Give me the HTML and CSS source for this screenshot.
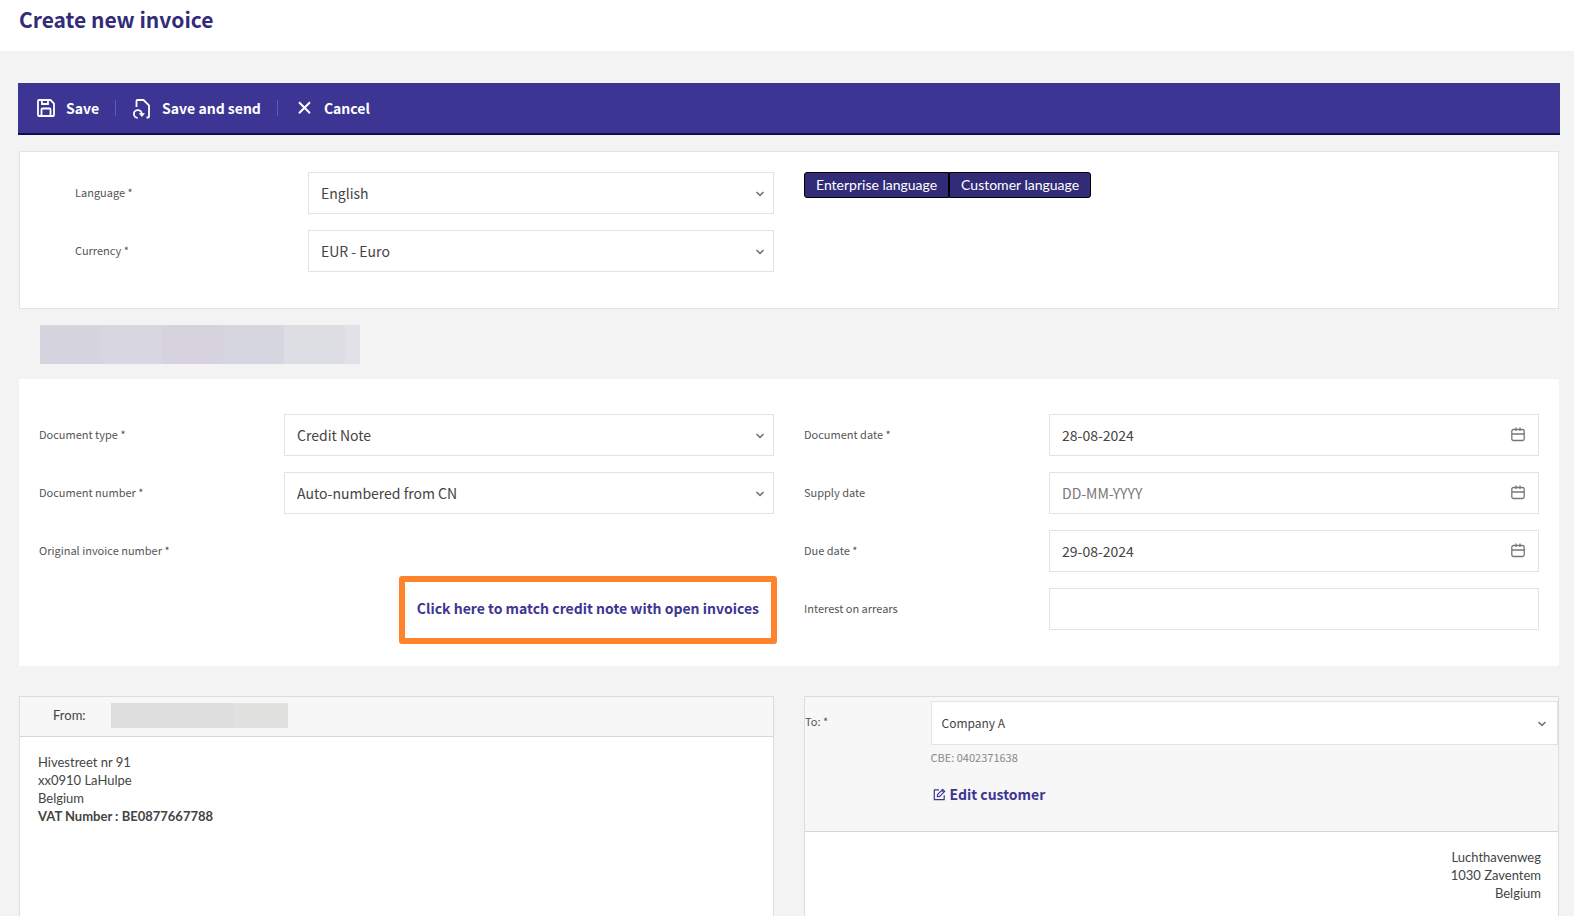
FILE: index.html
```html
<!DOCTYPE html>
<html lang="en">
<head>
<meta charset="utf-8">
<meta name="viewport" content="width=device-width, initial-scale=1">
<title>Create new invoice</title>
<link rel="stylesheet" href="styles.css">
</head>
<body>
<svg class="sprite" aria-hidden="true">
  <symbol id="chevron" viewBox="0 0 10 6"><path d="M1.5 1 5 4.3 8.500 1" fill="none" stroke="currentColor" stroke-width="1.700"/></symbol>
  <symbol id="calendar" viewBox="0 0 14 15"><path d="M2.500 2.500h9a1.700 1.700 0 0 1 1.700 1.700v7.600a1.700 1.700 0 0 1-1.700 1.700h-9a1.700 1.700 0 0 1-1.700-1.700V4.200a1.700 1.700 0 0 1 1.700-1.700zM1 7h12M5 .5v3.600M9 .5v3.600" fill="none" stroke="currentColor" stroke-width="1.300"/></symbol>
</svg>

<header class="page-header"><h1 class="page-title">Create new invoice</h1></header>

<main class="page">
  <div class="toolbar" role="toolbar" aria-label="Invoice actions">
    <button class="tool" type="button">
      <svg class="tool-icon" viewBox="0 0 20 20" aria-hidden="true"><path d="M3 2h11.500L18 5.500V17a1 1 0 0 1-1 1H3a1 1 0 0 1-1-1V3a1 1 0 0 1 1-1zM6 2v4h6V2M5.500 18v-6.500a1 1 0 0 1 1-1h7a1 1 0 0 1 1 1V18" fill="none" stroke="currentColor" stroke-width="1.800"/></svg>
      <span>Save</span>
    </button>
    <button class="tool" type="button">
      <svg class="tool-icon" viewBox="0 0 20 22" aria-hidden="true"><path d="M4.500 10V4a1 1 0 0 1 1-1h6L17 8.300V19.500a1 1 0 0 1-1 1h-1.500M5.700 20.900a3.900 3.900 0 1 1 4-3.900" fill="none" stroke="currentColor" stroke-width="1.800"/><path d="M6.800 16.300h6.200l-3.100 3.700z" fill="currentColor"/></svg>
      <span>Save and send</span>
    </button>
    <button class="tool" type="button">
      <svg class="tool-icon" viewBox="0 0 20 20" aria-hidden="true"><path d="M5 4.300l11 11M16 4.300l-11 11" fill="none" stroke="currentColor" stroke-width="2"/></svg>
      <span>Cancel</span>
    </button>
  </div>

  <section class="card card-locale">
    <div class="fields fields-inset">
      <div class="field">
        <label class="label" for="language">Language *</label>
        <div class="control"><select class="input" id="language"><option>English</option></select><svg class="chevron" aria-hidden="true"><use href="#chevron"/></svg></div>
      </div>
      <div class="field">
        <label class="label" for="currency">Currency *</label>
        <div class="control"><select class="input" id="currency"><option>EUR - Euro</option></select><svg class="chevron" aria-hidden="true"><use href="#chevron"/></svg></div>
      </div>
    </div>
    <div class="button-group">
      <button class="group-button" type="button">Enterprise language</button>
      <button class="group-button" type="button">Customer language</button>
    </div>
  </section>

  <div class="masked masked-title"></div>

  <section class="card card-document">
    <div class="fields">
      <div class="field">
        <label class="label" for="doctype">Document type *</label>
        <div class="control"><select class="input" id="doctype"><option>Credit Note</option></select><svg class="chevron" aria-hidden="true"><use href="#chevron"/></svg></div>
      </div>
      <div class="field">
        <label class="label" for="docnumber">Document number *</label>
        <div class="control"><select class="input" id="docnumber"><option>Auto-numbered from CN</option></select><svg class="chevron" aria-hidden="true"><use href="#chevron"/></svg></div>
      </div>
      <div class="field"><span class="label">Original invoice number *</span></div>
      <div class="match"><a class="link match-link" href="#match">Click here to match credit note with open invoices</a></div>
    </div>
    <div class="fields">
      <div class="field">
        <label class="label" for="docdate">Document date *</label>
        <div class="control"><input class="input" id="docdate" type="text" value="28-08-2024"><svg class="calendar" aria-hidden="true"><use href="#calendar"/></svg></div>
      </div>
      <div class="field">
        <label class="label" for="supplydate">Supply date</label>
        <div class="control"><input class="input" id="supplydate" type="text" placeholder="DD-MM-YYYY"><svg class="calendar" aria-hidden="true"><use href="#calendar"/></svg></div>
      </div>
      <div class="field">
        <label class="label" for="duedate">Due date *</label>
        <div class="control"><input class="input" id="duedate" type="text" value="29-08-2024"><svg class="calendar" aria-hidden="true"><use href="#calendar"/></svg></div>
      </div>
      <div class="field">
        <label class="label" for="interest">Interest on arrears</label>
        <div class="control"><input class="input" id="interest" type="text"></div>
      </div>
    </div>
  </section>

  <div class="parties">
    <section class="party">
      <div class="party-head from-head"><span class="from-label">From:</span><div class="masked masked-name"></div></div>
      <address class="address">Hivestreet nr 91<br>xx0910 LaHulpe<br>Belgium<br><strong>VAT Number : BE0877667788</strong></address>
    </section>
    <section class="party">
      <div class="party-head to-head">
        <label class="label to-label" for="customer">To: *</label>
        <div class="customer">
          <div class="control"><select class="input input-customer" id="customer"><option>Company A</option></select><svg class="chevron" aria-hidden="true"><use href="#chevron"/></svg></div>
          <p class="cbe">CBE: 0402371638</p>
          <a class="link edit-link" href="#edit"><svg class="edit-icon" viewBox="0 0 13 13" aria-hidden="true"><path d="M6 1.800H1.300v9.900h9.900V7.200M4.300 8.700l.4-2.400 5-5 2 2-5 5zM8.600 2.400l2 2" fill="none" stroke="currentColor" stroke-width="1.200" stroke-linejoin="round"/></svg><span>Edit customer</span></a>
        </div>
      </div>
      <address class="address address-right">Luchthavenweg<br>1030 Zaventem<br>Belgium</address>
    </section>
  </div>
</main>
</body>
</html>
```
FILE: styles.css
```css
* { box-sizing: border-box; }

body {
  margin: 0;
  min-height: 100vh;
  display: flex;
  flex-direction: column;
  background: #f3f3f3;
  color: #444;
  font-family: "Noto Sans CJK SC", "Open Sans", sans-serif;
  font-size: 14px;
}

button, input, select { font: inherit; color: inherit; }

.sprite { display: none; }

.page-header {
  height: 51px;
  padding: 3px 19px;
  background: #fff;
}

.page-title {
  margin: 0;
  color: #322b78;
  font-size: 21px;
  line-height: 32px;
  font-weight: 700;
}

.page {
  flex: 1;
  display: flex;
  flex-direction: column;
  padding: 32px 15px 0 19px;
}

.toolbar {
  display: flex;
  align-items: center;
  height: 52px;
  margin: 0 -1px;
  padding-left: 2px;
  background: #3d3594;
  border-bottom: 2px solid #120c48;
}

.tool {
  display: flex;
  align-items: center;
  gap: 10px;
  height: 16px;
  padding: 0 16px;
  border: 0;
  background: none;
  color: #fff;
  font-weight: 600;
}

.tool + .tool { border-left: 1px solid #5f58b4; }

.tool-icon { width: 20px; height: 22px; }

.card {
  display: grid;
  grid-template-columns: 1fr 1fr;
  column-gap: 30px;
  align-items: start;
  background: #fff;
}

.card-locale {
  margin-top: 16px;
  padding: 20px 19px 36px;
  border: 1px solid #e3e3e3;
}

.card-document { padding: 35px 20px 36px; }

.fields { display: grid; gap: 16px; }
.fields-inset { padding-left: 36px; }

.field {
  display: grid;
  grid-template-columns: 1fr 2fr;
  align-items: center;
  min-height: 42px;
}

.label {
  padding-bottom: 2px;
  color: #555;
  font-size: 11px;
  line-height: 16px;
}

.control { position: relative; }

.input {
  display: block;
  width: 100%;
  height: 42px;
  padding: 0 12px;
  border: 1px solid #e3e3e3;
  border-radius: 0;
  background: #fff;
  appearance: none;
}

.input::placeholder { color: #777; opacity: 1; }

.chevron {
  position: absolute;
  right: 9px;
  top: 50%;
  width: 10px;
  height: 6px;
  margin-top: -2px;
  color: #777;
  pointer-events: none;
}

.calendar {
  position: absolute;
  right: 14px;
  top: 13px;
  width: 14px;
  height: 15px;
  color: #777;
}

.button-group { display: flex; }

.group-button {
  height: 26px;
  padding: 0 11px 2px;
  border: 1px solid #000;
  background: #322b78;
  color: #fff;
  font: 14px Lato, sans-serif;
}

.group-button:first-child { border-radius: 3px 0 0 3px; }
.group-button:last-child { border-radius: 0 3px 3px 0; }

.masked-title {
  width: 320px;
  height: 39px;
  margin: 16px 0 15px 21px;
  background: linear-gradient(to right, #d6d4df 61px, #d8d6e0 61px 122px, #d6d3de 122px 183px, #d6d6e0 183px 244px, #dddee3 244px 305px, #e2e1e7 305px);
}

.link {
  color: #3d3594;
  font-weight: 600;
  text-decoration: none;
}

.match {
  display: flex;
  justify-content: flex-end;
  height: 42px;
}

.match-link {
  height: 68px;
  margin: -12px -3px 0 0;
  padding: 0 12px;
  border: 6px solid #ff832b;
  border-radius: 3px;
  line-height: 52px;
  white-space: nowrap;
}

.parties {
  flex: 1;
  display: grid;
  grid-template-columns: 1fr 1fr;
  column-gap: 30px;
  margin-top: 30px;
}

.party {
  border: 1px solid #dcdcdc;
  border-bottom: 0;
  background: #fff;
}

.party-head {
  background: #f7f7f7;
  border-bottom: 1px solid #d6d6d6;
}

.from-head {
  display: flex;
  align-items: flex-start;
  gap: 25px;
  height: 40px;
  padding: 6px 33px;
}

.from-label { font: 13px/24px Lato, sans-serif; }

.masked-name {
  width: 177px;
  height: 25px;
  background: linear-gradient(to right, #ddd 122px, #e1e1df 122px);
}

.to-head {
  display: grid;
  grid-template-columns: 1fr 5fr;
  height: 135px;
  padding-top: 4px;
}

.to-label { padding-top: 12px; }

.customer .chevron { right: 11px; }

.input-customer {
  height: 44px;
  padding: 0 10px 2px;
  font-size: 12px;
}

.cbe {
  margin: 4px 0 19px;
  color: #888;
  font-size: 11px;
  line-height: 16px;
}

.edit-link {
  display: flex;
  align-items: center;
  gap: 4px;
  padding-left: 2px;
  line-height: 20px;
}

.edit-icon { width: 13px; height: 13px; }

.address {
  padding: 16px 17px 16px 18px;
  font: 13px/18px Lato, sans-serif;
}

.address-right { text-align: right; }
```
